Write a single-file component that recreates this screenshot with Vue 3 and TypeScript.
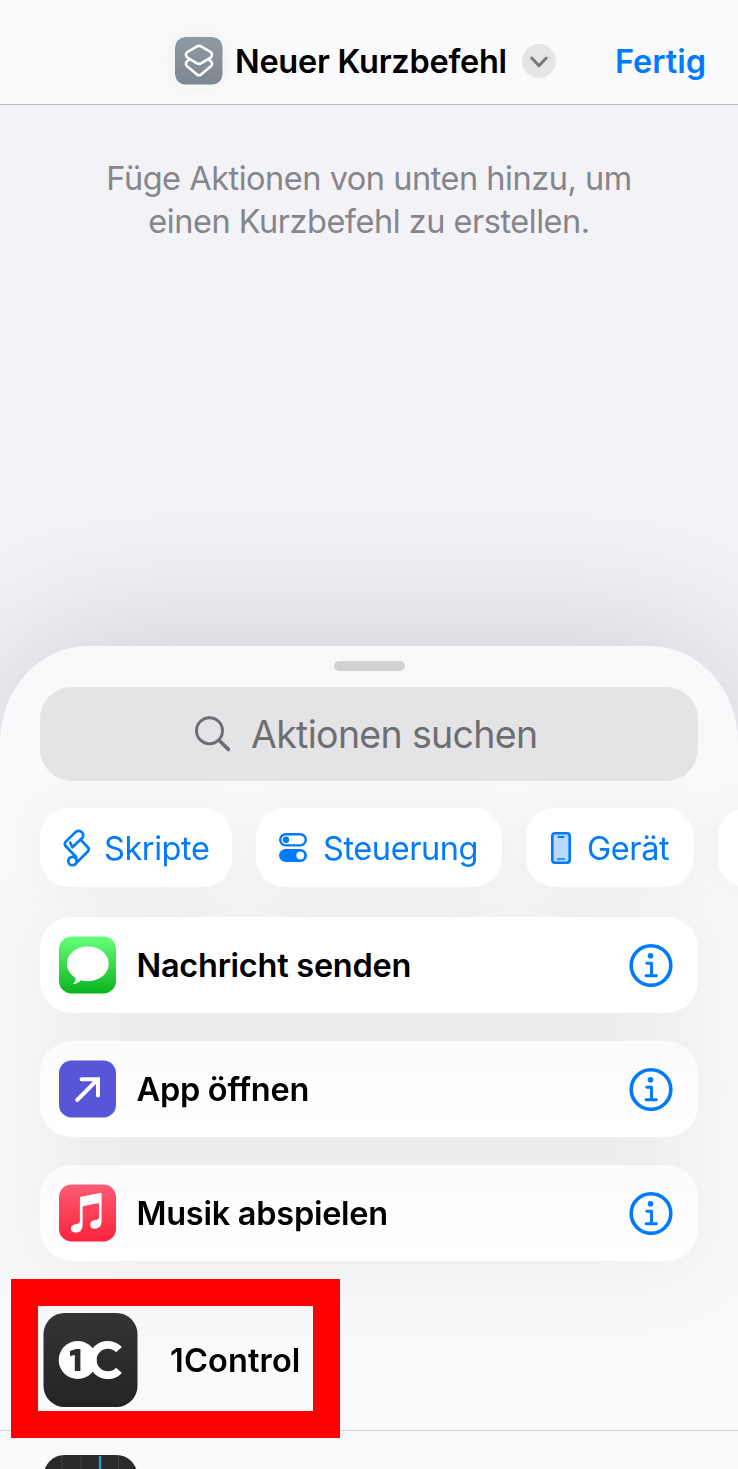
<script setup lang="ts">
interface Action {
  id: 'message' | 'open' | 'music'
  label: string
}

const actions: Action[] = [
  { id: 'message', label: 'Nachricht senden' },
  { id: 'open', label: 'App öffnen' },
  { id: 'music', label: 'Musik abspielen' },
]
</script>

<template>
  <div class="screen">
    <header class="bar">
      <svg class="bar-icon" width="48" height="48" viewBox="0 0 48 48">
        <defs>
          <linearGradient id="slate" x1="0" y1="0" x2="0" y2="1">
            <stop offset="0" stop-color="#8f9aa3" />
            <stop offset="1" stop-color="#7d8790" />
          </linearGradient>
        </defs>
        <rect width="47.500" height="47.500" rx="10" fill="url(#slate)" />
        <g fill="none" stroke="#fff" stroke-width="2.600" stroke-linejoin="round" stroke-linecap="round">
          <path d="M22 9.400Q24 8.400 26 9.400L35.600 15Q38.600 17.800 35.600 20.600L26 26.400Q24 27.400 22 26.400L12.400 20.600Q9.400 17.800 12.400 15Z" />
          <path d="M14.600 22.400L12.400 24Q9.400 26.800 12.400 29.600L22 37.600Q24 38.900 26 37.600L35.600 29.600Q38.600 26.800 35.600 24L33.400 22.400" />
        </g>
      </svg>
      <h1 class="title">Neuer Kurzbefehl</h1>
      <svg class="chevron" width="34" height="34" viewBox="0 0 34 34">
        <circle cx="17" cy="17" r="17" fill="#e5e5e7" />
        <path d="M9.700 14L17 21.600L24.300 14" fill="none" stroke="#79797c" stroke-width="3" stroke-linecap="round" stroke-linejoin="round" />
      </svg>
      <a class="done">Fertig</a>
    </header>

    <p class="hint">Füge Aktionen von unten hinzu, um<br />einen Kurzbefehl zu erstellen.</p>

    <main class="sheet">
      <div class="grabber"></div>
      <div class="search">
        <svg width="38" height="38" viewBox="0 0 38 38" fill="none" stroke="#6e6e72" stroke-linecap="round">
          <circle cx="15.500" cy="15.700" r="13" stroke-width="2.900" />
          <path d="M25.300 25.500L34.300 34.400" stroke-width="3.800" />
        </svg>
        <span class="search-text">Aktionen suchen</span>
      </div>

      <nav class="chips">
        <div class="chip chip-script">
          <svg width="28" height="38" viewBox="0 0 28 38" fill="none" stroke="#007aff" stroke-width="2.700" stroke-linejoin="round" stroke-linecap="round">
            <path d="M3 17.500Q.6 14.800 3 12.400L12.800 2.900Q15.500.8 18.400 2.800Q21.500 5.500 19.300 8.800L9.500 18.200L7.200 13.600" />
            <path d="M17.800 10.800L25 18.500Q26.600 20.300 25 22.200L12.500 34.900M3 17.500L13.300 28.200" />
            <circle cx="9.500" cy="32" r="4.200" />
          </svg>
          <span>Skripte</span>
        </div>
        <div class="chip chip-control">
          <svg width="28" height="29" viewBox="0 0 28 29">
            <rect x="1.200" y="1.200" width="25.600" height="11.200" rx="5.600" fill="none" stroke="#007aff" stroke-width="2.400" />
            <circle cx="7" cy="6.800" r="3.200" fill="#007aff" />
            <rect y="16" width="28" height="13" rx="6.500" fill="#007aff" />
            <circle cx="21.300" cy="22.500" r="3.900" fill="#fff" />
          </svg>
          <span>Steuerung</span>
        </div>
        <div class="chip chip-device">
          <svg width="20" height="32" viewBox="0 0 20 32">
            <rect x="1.300" y="1.300" width="17.400" height="29.400" rx="2.700" fill="#b9d9ff" stroke="#007aff" stroke-width="2.600" />
            <path d="M7.500 5H12.500" stroke="#007aff" stroke-width="2.200" stroke-linecap="round" />
            <path d="M6.500 27H13.500" stroke="#007aff" stroke-width="1.500" stroke-linecap="round" />
          </svg>
          <span>Gerät</span>
        </div>
        <div class="chip chip-next"></div>
      </nav>

      <section class="cards">
        <article v-for="action in actions" :key="action.id" class="card" :class="action.id">
          <svg v-if="action.id === 'message'" width="58" height="58" viewBox="0 0 58 58">
            <defs>
              <linearGradient id="green" x1="0" y1="0" x2="0" y2="1">
                <stop offset="0" stop-color="#67ff7d" />
                <stop offset="1" stop-color="#08b51d" />
              </linearGradient>
            </defs>
            <rect x="0" y=".5" width="57" height="57" rx="12.500" fill="url(#green)" />
            <path d="M28.800 10.500C40.500 10.500 49.700 18 49.700 27.800S40.500 45.200 28.800 45.200C26.400 45.200 24 44.900 21.700 44.200C20 46.400 17.300 47.900 14.700 48C14.200 48 14.300 47.500 14.600 47.200C16 45.900 16.700 43.900 16.400 41.800C11.300 38.700 8 33.700 8 27.800C8 18 17.200 10.500 28.800 10.500Z" fill="#fff" />
          </svg>
          <svg v-else-if="action.id === 'open'" width="58" height="58" viewBox="0 0 58 58">
            <rect x="0" y=".5" width="57" height="57" rx="12.500" fill="#5856d6" />
            <path d="M18.200 40L38.500 19.700M22.600 19.200H39V35.600" fill="none" stroke="#fff" stroke-width="4" stroke-linecap="round" stroke-linejoin="miter" />
          </svg>
          <svg v-else width="58" height="58" viewBox="0 0 58 58">
            <defs>
              <linearGradient id="red" x1="0" y1="0" x2="0" y2="1">
                <stop offset="0" stop-color="#fb5c74" />
                <stop offset="1" stop-color="#fa233b" />
              </linearGradient>
            </defs>
            <rect x="0" y=".5" width="57" height="57" rx="12.500" fill="url(#red)" />
            <path transform="translate(-.6 0)" d="M21.500 14.300Q21.500 13.100 22.700 12.800L41.800 9Q43.200 8.800 43.200 10.200V37.500C43.200 42 40.500 44.400 37 44.800C33.800 45.100 31.700 43.300 31.800 40.800C31.900 38 33.800 36.700 36.800 36.100C39.400 35.600 40.600 35.200 40.600 33.200V20.200Q40.600 18.900 39.300 19.200L25.200 21.900Q24.200 22.100 24.200 23.100V41C24.200 46 21.600 48.300 18 48.600C14.500 48.800 12.500 47 12.500 44.700C12.500 42 14.400 40.700 17.200 40.200C20.200 39.600 21.500 39.200 21.500 37Z" fill="#fff" />
          </svg>
          <span class="card-label">{{ action.label }}</span>
          <svg class="info" width="44" height="44" viewBox="0 0 44 44" fill="none" stroke="#007aff">
            <circle cx="22" cy="22.500" r="19.800" stroke-width="3.600" />
            <circle cx="21.500" cy="12.800" r="2.800" fill="#007aff" stroke="none" />
            <path d="M17.800 20.200H22.500V32.600M17 32.700H27.400" stroke-width="2.900" stroke-linecap="round" stroke-linejoin="round" />
          </svg>
        </article>
      </section>

      <section class="apps">
        <div class="app-row">
          <svg width="95" height="95" viewBox="0 0 95 95">
            <defs>
              <linearGradient id="coal" x1="0" y1="0" x2="0" y2="1">
                <stop offset="0" stop-color="#343434" />
                <stop offset="1" stop-color="#242424" />
              </linearGradient>
            </defs>
            <rect x=".5" y="0" width="94" height="94" rx="21" fill="url(#coal)" />
            <circle cx="34.700" cy="47" r="19" fill="#fff" />
            <path d="M76 36.700A15.200 15.200 0 1 0 76 57.300" fill="none" stroke="#fff" stroke-width="7.800" />
            <path d="M27 38L33 35.900H37.400V58H31.800V42L27 43Z" fill="#2c2c2c" />
          </svg>
          <span class="app-name">1Control</span>
        </div>
        <div class="app-row-next">
          <svg width="95" height="95" viewBox="0 0 95 95">
            <rect x=".5" y="0" width="94" height="94" rx="21" fill="#292a2b" />
            <path d="M19 1V94M38 1V94M75.500 1V94" stroke="#414244" stroke-width="1" />
            <path d="M57 1V94" stroke="#2b95b8" stroke-width="2.500" />
          </svg>
        </div>
        <div class="highlight"></div>
      </section>
    </main>
  </div>
</template>

<style>
body {
  margin: 0;
  overflow: hidden;
}
</style>

<style scoped>
.screen {
  width: 738px;
  height: 1469px;
  overflow: hidden;
  display: flex;
  flex-direction: column;
  background: #f2f2f7;
  font-family: Inter, 'Liberation Sans', sans-serif;
  color: #000;
}
.screen span, .title, .done { white-space: nowrap; }
svg { display: block; flex: none; }
.bar {
  position: relative;
  z-index: 1;
  box-sizing: border-box;
  height: 105px;
  flex: none;
  display: flex;
  align-items: center;
  padding: 17px 0 0 175px;
  border-bottom: 1px solid #bdbdc1;
  background: #fafafc;
}
.bar-icon { border-radius: 10px; box-shadow: 0 0 24px rgba(0, 0, 0, .06); }
.title {
  margin: 0 0 0 12px;
  padding-top: 2px;
  width: 287px;
  font-size: 32.500px;
  line-height: 40px;
  font-weight: 600;
  letter-spacing: -.26px;
}
.done {
  margin-left: 59px;
  padding-top: 2px;
  color: #007aff;
  font-size: 32.500px;
  line-height: 40px;
  font-weight: 600;
}
.hint {
  height: 541px;
  margin: 0;
  padding-top: 52px;
  box-sizing: border-box;
  flex: none;
  text-align: center;
  font-size: 32.500px;
  line-height: 43px;
  letter-spacing: -.48px;
  color: #85858a;
}
.sheet {
  position: relative;
  flex: none;
  height: 900px;
  box-sizing: border-box;
  padding-top: 15px;
  border-radius: 88px 88px 0 0 / 96px 96px 0 0;
  background: #f8f9fb;
  box-shadow: 0 0 160px rgba(0, 0, 0, .17);
}
.grabber {
  width: 71px;
  height: 10px;
  margin: 0 auto;
  border-radius: 5px;
  background: #d0d1d3;
}
.search {
  height: 94px;
  margin: 16px 40px 0;
  box-sizing: border-box;
  padding-left: 154px;
  display: flex;
  align-items: center;
  gap: 19px;
  border-radius: 32px;
  background: #e4e4e6;
  color: #6e6e72;
  font-size: 37.500px;
}
.search-text { letter-spacing: -.68px; padding-top: 1px; }
.chips {
  position: relative;
  z-index: 1;
  display: flex;
  gap: 24px;
  margin: 27px 0 0 40px;
  filter: drop-shadow(0 0 22px rgba(0, 0, 0, .035));
}
.chip {
  box-sizing: border-box;
  flex: none;
  height: 79px;
  display: flex;
  align-items: center;
  border-radius: 29px;
  background: #fff;
  color: #007aff;
  font-size: 32.500px;
  letter-spacing: -.42px;
}
.chip span { padding-top: 2px; }
.chip-script { width: 192px; padding-left: 23px; gap: 13px; }
.chip-control { width: 246px; padding-left: 23px; gap: 16px; }
.chip-device { width: 168px; padding-left: 25px; gap: 16px; }
.chip-next { width: 170px; }
.cards {
  display: flex;
  flex-direction: column;
  gap: 28px;
  margin: 30px 40px 0;
  filter: drop-shadow(0 0 44px rgba(0, 0, 0, .062));
}
.card {
  height: 96px;
  box-sizing: border-box;
  padding: 0 25px 0 19px;
  display: flex;
  align-items: center;
  border-radius: 32px;
  background: linear-gradient(#fbfbfc, #fff);
}
.card.message { background: #fff; }
.card-label {
  margin-left: 19.500px;
  padding-top: 1px;
  font-size: 32.500px;
  font-weight: 600;
  letter-spacing: -.26px;
}
.info { margin-left: auto; }
.apps {
  position: relative;
  display: flex;
  flex-direction: column;
}
.app-row {
  box-sizing: border-box;
  height: 170px;
  padding: 52px 0 0 43px;
  display: flex;
  align-items: flex-start;
  border-bottom: 1px solid #d0d0d3;
}
.app-name {
  margin-left: 32px;
  line-height: 96px;
  font-size: 32.500px;
  font-weight: 600;
  letter-spacing: .15px;
}
.app-row-next { padding: 24px 0 0 43px; }
.highlight {
  position: absolute;
  left: 11px;
  top: 18px;
  width: 275px;
  height: 105px;
  border: 27px solid #f00;
}
</style>
